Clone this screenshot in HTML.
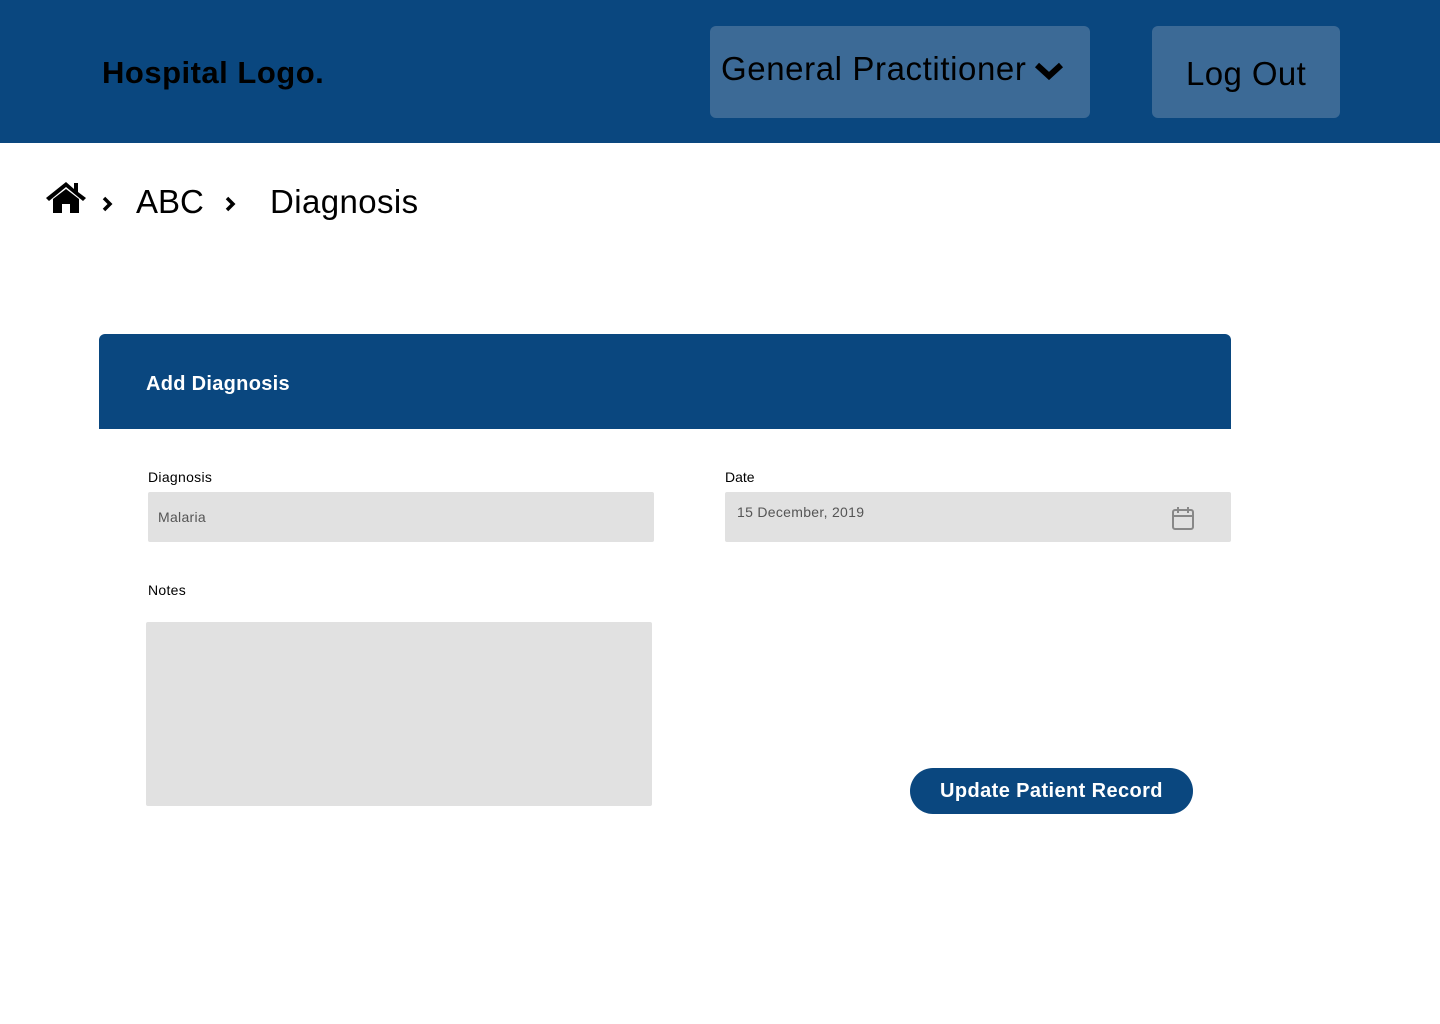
<!DOCTYPE html>
<html><head><style>
body{margin:0;width:1440px;height:1024px;background:#fff;font-family:"Liberation Sans",sans-serif;position:relative;overflow:hidden}
.a{position:absolute}
</style></head><body>
<div class="a" style="left:0;top:0;width:1440px;height:143px;background:#0a477f"></div>
<div class="a" style="left:102px;top:55px;font-size:31px;font-weight:bold;color:#000;letter-spacing:0.5px">Hospital Logo.</div>
<div class="a" style="left:710px;top:26px;width:380px;height:92px;background:#3c6a96;border-radius:6px"></div>
<div class="a" style="left:721px;top:50px;font-size:33px;color:#000;letter-spacing:0.6px">General Practitioner</div>
<svg class="a" style="left:1034px;top:60px" width="30" height="22" viewBox="0 0 30 22"><path d="M3 5 L15 16 L27 5" stroke="#000" stroke-width="6" fill="none"/></svg>
<div class="a" style="left:1152px;top:26px;width:188px;height:92px;background:#3c6a96;border-radius:6px"></div>
<div class="a" style="left:1186px;top:55px;font-size:33px;color:#000;letter-spacing:0.4px">Log Out</div>
<svg class="a" style="left:45px;top:180px" width="42" height="34" viewBox="0 0 42 34"><path d="M21 2 L1 18 L4 21 L21 7 L38 21 L41 18 L33 12 L33 3 L29 3 L29 9 Z" fill="#000"/><path d="M8 19 L21 9 L34 19 L34 33 L25 33 L25 24 L17 24 L17 33 L8 33 Z" fill="#000"/></svg>
<svg class="a" style="left:101px;top:196px" width="12" height="16" viewBox="0 0 12 16"><path d="M3 2 L9 8 L3 14" stroke="#000" stroke-width="3.5" fill="none"/></svg>
<div class="a" style="left:136px;top:183px;font-size:33px">ABC</div>
<svg class="a" style="left:224px;top:196px" width="12" height="16" viewBox="0 0 12 16"><path d="M3 2 L9 8 L3 14" stroke="#000" stroke-width="3.5" fill="none"/></svg>
<div class="a" style="left:270px;top:183px;font-size:33px;letter-spacing:0.4px">Diagnosis</div>
<div class="a" style="left:99px;top:334px;width:1132px;height:95px;background:#0a477f;border-radius:6px 6px 0 0"></div>
<div class="a" style="left:146px;top:373px;font-size:20px;font-weight:bold;color:#fff;letter-spacing:0.3px">Add Diagnosis</div>
<div class="a" style="left:148px;top:469px;font-size:14px;letter-spacing:0.3px">Diagnosis</div>
<div class="a" style="left:148px;top:492px;width:506px;height:50px;background:#e1e1e1;border-radius:2px"></div>
<div class="a" style="left:158px;top:509px;font-size:14px;color:#555;letter-spacing:0.3px">Malaria</div>
<div class="a" style="left:725px;top:469px;font-size:14px">Date</div>
<div class="a" style="left:725px;top:492px;width:506px;height:50px;background:#e1e1e1;border-radius:2px"></div>
<div class="a" style="left:737px;top:504px;font-size:14px;color:#555;letter-spacing:0.3px">15 December, 2019</div>
<svg class="a" style="left:1171px;top:505px" width="24" height="26" viewBox="0 0 24 26"><rect x="2" y="5" width="20" height="19" rx="2" fill="none" stroke="#888" stroke-width="2"/><path d="M2 11 H22 M7 2 V8 M17 2 V8" stroke="#888" stroke-width="2"/></svg>
<div class="a" style="left:148px;top:582px;font-size:14px;letter-spacing:0.3px">Notes</div>
<div class="a" style="left:146px;top:622px;width:506px;height:184px;background:#e1e1e1;border-radius:2px"></div>
<div class="a" style="left:910px;top:768px;width:283px;height:46px;background:#0a477f;border-radius:23px;color:#fff;font-size:20px;font-weight:bold;text-align:center;line-height:46px;letter-spacing:0.4px">Update Patient Record</div>
</body></html>
